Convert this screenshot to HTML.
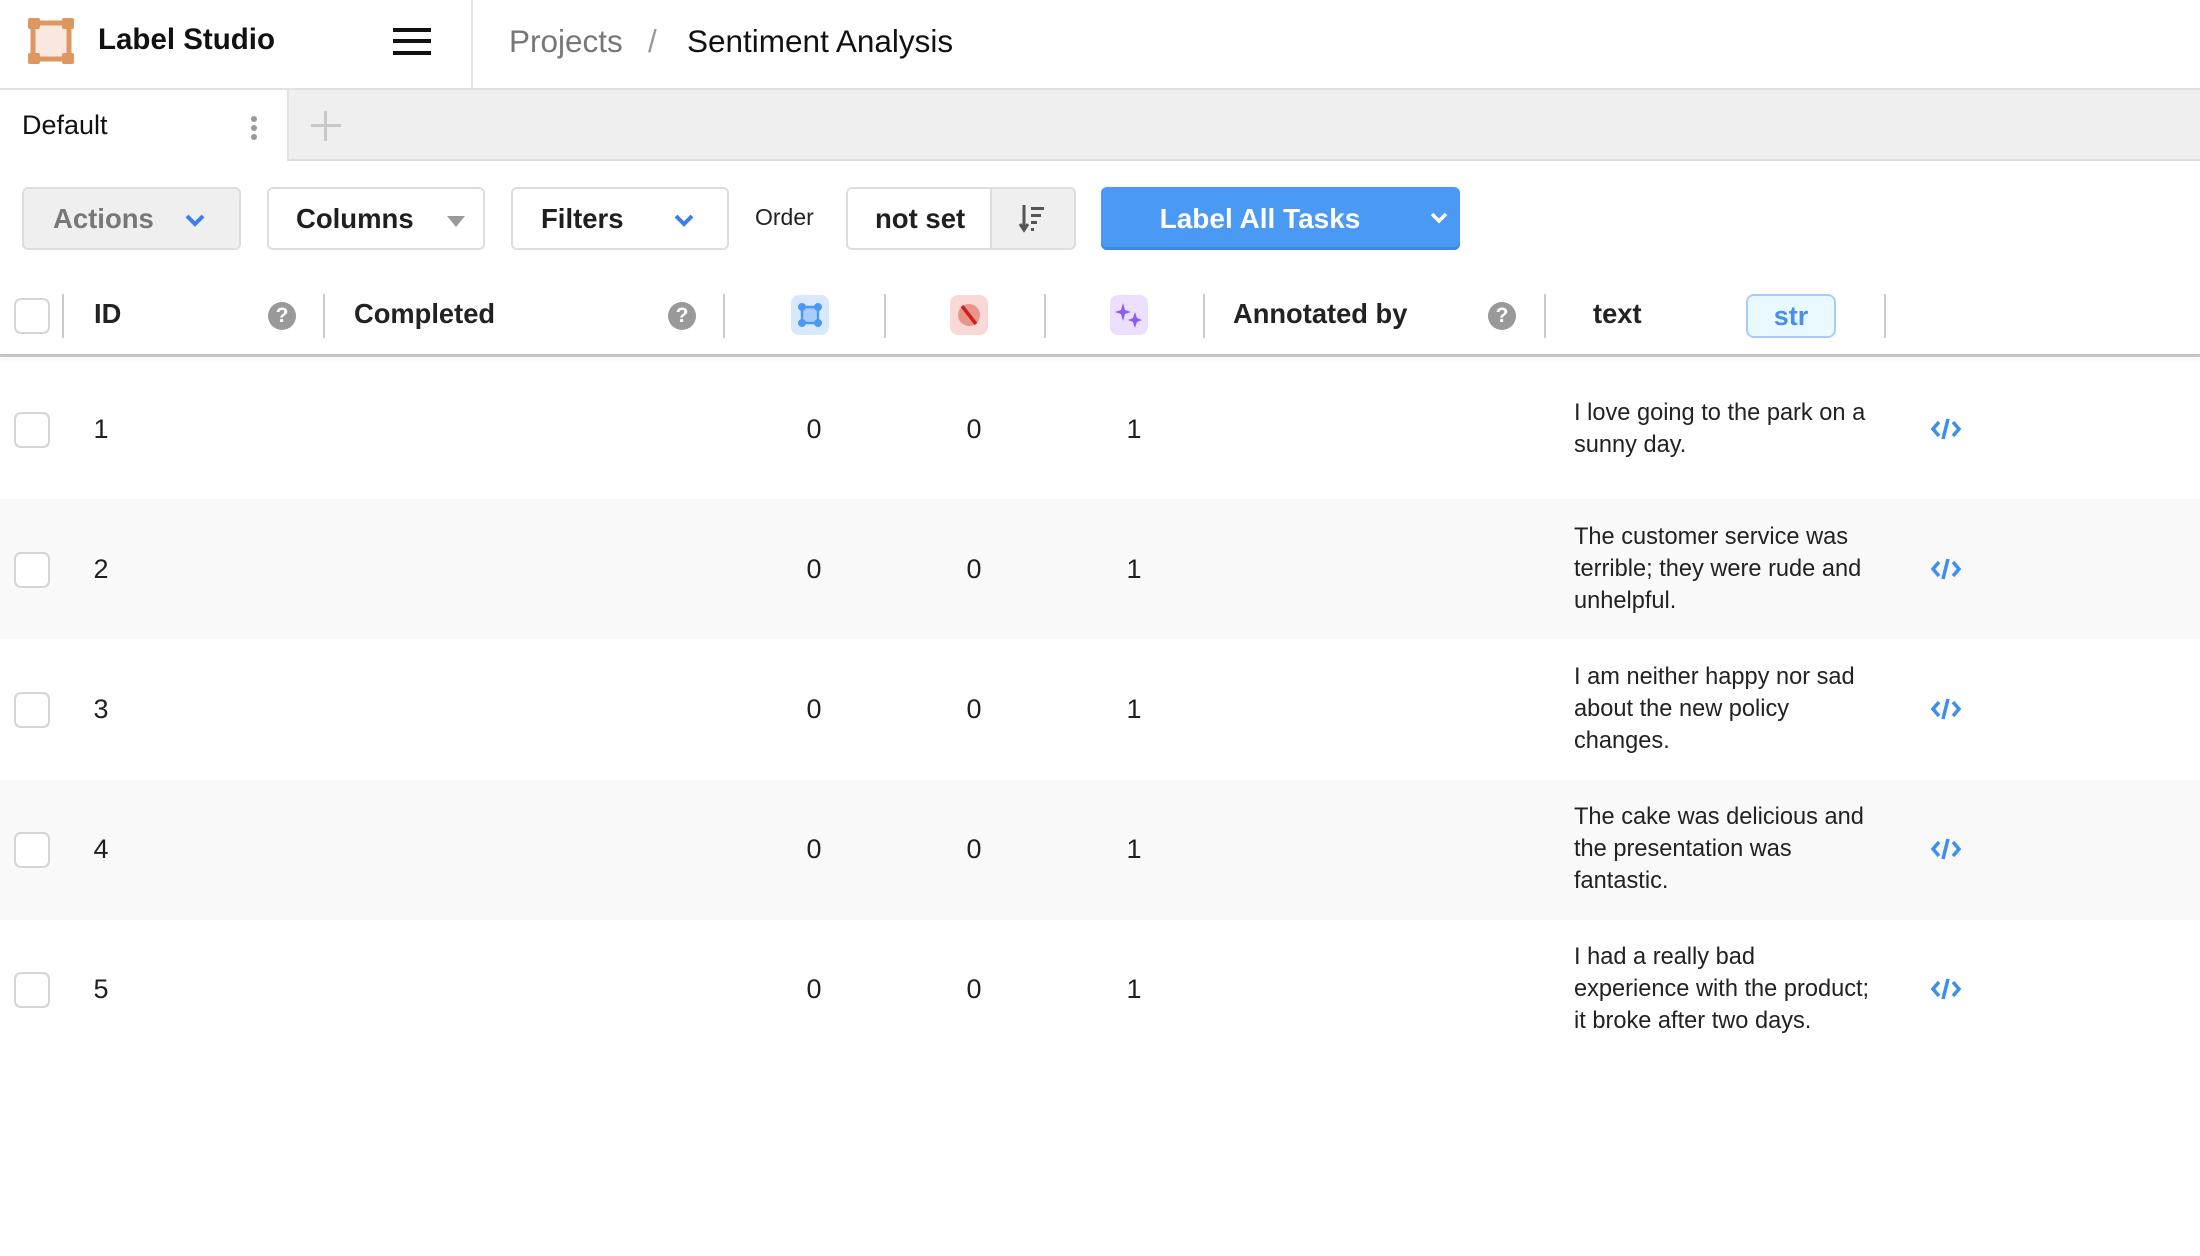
<!DOCTYPE html>
<html><head><meta charset="utf-8"><style>
*{box-sizing:border-box;margin:0;padding:0}
body{width:2200px;height:1256px;background:#fff;font-family:"Liberation Sans",sans-serif;color:#1f1f1f;position:relative;overflow:hidden}
.a{position:absolute}
.btn{position:absolute;top:187px;height:63px;border:2px solid #ddd;border-radius:6px;background:#fff;font-size:27.5px;font-weight:bold;display:flex;align-items:center}
.sep{position:absolute;top:294px;width:2px;height:44px;background:#ccc}
.cb{position:absolute;left:14px;width:36px;height:36px;border:2px solid #d5d5d5;border-radius:7px;background:#fff}
.row{position:absolute;left:0;width:2200px;height:140px}
.num{position:absolute;font-size:27px;transform:translateX(-50%)}
.txt{position:absolute;left:1574px;font-size:23.6px;line-height:32px;width:400px;white-space:nowrap;color:#222}
.help{position:absolute;top:302px;width:28px;height:28px;border-radius:50%;background:#999;color:#fff;font-size:21px;font-weight:bold;text-align:center;line-height:28px}
.hd{position:absolute;top:298px;font-size:27.3px;font-weight:bold;color:#222}
.ic{position:absolute;top:295px;width:38px;height:40px;border-radius:8px}
</style></head><body>
<svg class="a" style="left:28px;top:18px" width="48" height="46" viewBox="0 0 48 46"><rect x="5" y="5" width="36" height="36" fill="#f8e8df" stroke="#df9761" stroke-width="5"/><rect x="0" y="0" width="12" height="11" rx="2" fill="#df9761"/><rect x="34" y="0" width="12" height="11" rx="2" fill="#df9761"/><rect x="0" y="35" width="12" height="11" rx="2" fill="#df9761"/><rect x="34" y="35" width="12" height="11" rx="2" fill="#df9761"/></svg>
<div class="a" style="left:98px;top:23px;font-size:29.5px;font-weight:bold;color:#111">Label Studio</div>
<div class="a" style="left:393px;top:28px;width:38px;height:4px;background:#111"></div>
<div class="a" style="left:393px;top:39px;width:38px;height:4px;background:#111"></div>
<div class="a" style="left:393px;top:51px;width:38px;height:4px;background:#111"></div>
<div class="a" style="left:471px;top:0;width:2px;height:88px;background:#e6e6e6"></div>
<div class="a" style="left:509px;top:23px;font-size:31.5px;color:#777">Projects</div>
<div class="a" style="left:648px;top:23px;font-size:31.5px;color:#999">/</div>
<div class="a" style="left:687px;top:23px;font-size:31.5px;color:#111">Sentiment Analysis</div>
<div class="a" style="left:0;top:88px;width:2200px;height:73px;background:#efefef;border-top:2px solid #e2e2e2;border-bottom:2px solid #ddd"></div>
<div class="a" style="left:0;top:90px;width:289px;height:71px;background:#fff;border-right:2px solid #e2e2e2"></div>
<div class="a" style="left:22px;top:110px;font-size:27px;color:#111">Default</div>
<div class="a" style="left:251px;top:116px;width:6px;height:6px;border-radius:3px;background:#999;box-shadow:0 9px 0 #999,0 18px 0 #999"></div>
<div class="a" style="left:311px;top:124px;width:30px;height:3px;background:#c8c8c8"></div>
<div class="a" style="left:324px;top:111px;width:3px;height:30px;background:#c8c8c8"></div>
<div class="btn" style="left:22px;width:219px;background:#efefef;color:#777;padding-left:29px">Actions<svg class="a" style="left:160px;top:24px" width="22" height="14" viewBox="0 0 22 14"><path d="M3 3l8 8 8-8" stroke="#3c7df0" stroke-width="4" fill="none"/></svg></div>
<div class="btn" style="left:267px;width:218px;padding-left:27px">Columns<svg class="a" style="left:178px;top:27px" width="18" height="11"><path d="M0 0h18L9 11z" fill="#999"/></svg></div>
<div class="btn" style="left:511px;width:218px;padding-left:28px">Filters<svg class="a" style="left:160px;top:24px" width="22" height="14" viewBox="0 0 22 14"><path d="M3 3l8 8 8-8" stroke="#3c7df0" stroke-width="4" fill="none"/></svg></div>
<div class="a" style="left:755px;top:204px;font-size:23px;color:#222">Order</div>
<div class="btn" style="left:846px;width:230px;padding-left:27px;overflow:hidden">not set<div class="a" style="left:142px;top:0;width:86px;height:59px;background:#efefef;border-left:2px solid #ddd"></div><svg class="a" style="left:170px;top:14px" width="32" height="32" viewBox="0 0 32 32"><path d="M6 2v24M2 21l4 6 4-6" stroke="#555" stroke-width="3" fill="none"/><rect x="13" y="4" width="13" height="3" fill="#555"/><rect x="13" y="11" width="10" height="3" fill="#555"/><rect x="13" y="18" width="6" height="3" fill="#555"/><rect x="13" y="25" width="3" height="3" fill="#555"/></svg></div>
<div class="a" style="left:1101px;top:187px;width:359px;height:63px;border-radius:6px;background:#4a9af5;box-shadow:inset 0 -3px 0 #3d87dc"></div>
<div class="a" style="left:1101px;top:203px;width:318px;text-align:center;font-size:28px;font-weight:bold;color:#fff">Label All Tasks</div>
<svg class="a" style="left:1429px;top:211px" width="20" height="14" viewBox="0 0 20 14"><path d="M3 3l7 7 7-7" stroke="#fff" stroke-width="3.5" fill="none"/></svg>
<div class="cb" style="top:298px"></div>
<div class="sep" style="left:62px"></div><div class="sep" style="left:323px"></div><div class="sep" style="left:723px"></div><div class="sep" style="left:884px"></div><div class="sep" style="left:1044px"></div><div class="sep" style="left:1203px"></div><div class="sep" style="left:1544px"></div><div class="sep" style="left:1884px"></div>
<div class="hd" style="left:94px">ID</div><div class="help" style="left:268px">?</div>
<div class="hd" style="left:354px">Completed</div><div class="help" style="left:668px">?</div>
<div class="ic" style="left:791px;background:#d8e9fe"><svg width="38" height="40" viewBox="0 0 38 40"><rect x="11" y="12" width="16" height="16" fill="#a9ccfa" stroke="#4a9af5" stroke-width="2.5"/><circle cx="11" cy="12" r="4" fill="#4a9af5"/><circle cx="27" cy="12" r="4" fill="#4a9af5"/><circle cx="11" cy="28" r="4" fill="#4a9af5"/><circle cx="27" cy="28" r="4" fill="#4a9af5"/></svg></div>
<div class="ic" style="left:950px;background:#f8d9d5"><svg width="38" height="40" viewBox="0 0 38 40"><circle cx="19" cy="20" r="11" fill="#e9958c"/><path d="M12 11l14 18" stroke="#c9231c" stroke-width="3.5"/></svg></div>
<div class="ic" style="left:1110px;background:#ebdffd"><svg width="38" height="40" viewBox="0 0 38 40"><path d="M13 8l2 7 6 2-6 2-2 7-2-7-6-2 6-2z M25 17l2 6 5 2-5 2-2 6-2-6-5-2 5-2z" fill="#8b5cf0"/></svg></div>
<div class="hd" style="left:1233px">Annotated by</div><div class="help" style="left:1488px">?</div>
<div class="hd" style="left:1593px">text</div>
<div class="a" style="left:1746px;top:294px;width:90px;height:44px;border:2px solid #a9cdfb;border-radius:8px;background:#eaf9ff;color:#4a8ef0;font-size:27px;font-weight:bold;text-align:center;line-height:40px">str</div>
<div class="a" style="left:0;top:354px;width:2200px;height:3px;background:#c4c4c4;box-shadow:0 2px 6px rgba(0,0,0,0.08)"></div>
<div class="row" style="top:359px"></div>
<div class="row" style="top:499px;background:#f9f9f9"></div>
<div class="row" style="top:640px"></div>
<div class="row" style="top:780px;background:#f9f9f9"></div>
<div class="row" style="top:920px"></div>

<div class="cb" style="top:412px"></div><div class="num" style="left:101px;top:414px">1</div><div class="num" style="left:814px;top:414px">0</div><div class="num" style="left:974px;top:414px">0</div><div class="num" style="left:1134px;top:414px">1</div>
<div class="txt" style="top:397px">I love going to the park on a<br>sunny day.</div>

<div class="cb" style="top:552px"></div><div class="num" style="left:101px;top:554px">2</div><div class="num" style="left:814px;top:554px">0</div><div class="num" style="left:974px;top:554px">0</div><div class="num" style="left:1134px;top:554px">1</div>
<div class="txt" style="top:521px">The customer service was<br>terrible; they were rude and<br>unhelpful.</div>

<div class="cb" style="top:692px"></div><div class="num" style="left:101px;top:694px">3</div><div class="num" style="left:814px;top:694px">0</div><div class="num" style="left:974px;top:694px">0</div><div class="num" style="left:1134px;top:694px">1</div>
<div class="txt" style="top:661px">I am neither happy nor sad<br>about the new policy<br>changes.</div>

<div class="cb" style="top:832px"></div><div class="num" style="left:101px;top:834px">4</div><div class="num" style="left:814px;top:834px">0</div><div class="num" style="left:974px;top:834px">0</div><div class="num" style="left:1134px;top:834px">1</div>
<div class="txt" style="top:801px">The cake was delicious and<br>the presentation was<br>fantastic.</div>

<div class="cb" style="top:972px"></div><div class="num" style="left:101px;top:974px">5</div><div class="num" style="left:814px;top:974px">0</div><div class="num" style="left:974px;top:974px">0</div><div class="num" style="left:1134px;top:974px">1</div>
<div class="txt" style="top:941px">I had a really bad<br>experience with the product;<br>it broke after two days.</div>

<svg class="a" style="left:1931px;top:417px" width="30" height="24" viewBox="0 0 30 24"><path d="M8 5L2 12l6 7M22 5l6 7-6 7M17 2l-5 20" stroke="#3c8ef0" stroke-width="3.5" fill="none"/></svg>
<svg class="a" style="left:1931px;top:557px" width="30" height="24" viewBox="0 0 30 24"><path d="M8 5L2 12l6 7M22 5l6 7-6 7M17 2l-5 20" stroke="#3c8ef0" stroke-width="3.5" fill="none"/></svg>
<svg class="a" style="left:1931px;top:697px" width="30" height="24" viewBox="0 0 30 24"><path d="M8 5L2 12l6 7M22 5l6 7-6 7M17 2l-5 20" stroke="#3c8ef0" stroke-width="3.5" fill="none"/></svg>
<svg class="a" style="left:1931px;top:837px" width="30" height="24" viewBox="0 0 30 24"><path d="M8 5L2 12l6 7M22 5l6 7-6 7M17 2l-5 20" stroke="#3c8ef0" stroke-width="3.5" fill="none"/></svg>
<svg class="a" style="left:1931px;top:977px" width="30" height="24" viewBox="0 0 30 24"><path d="M8 5L2 12l6 7M22 5l6 7-6 7M17 2l-5 20" stroke="#3c8ef0" stroke-width="3.5" fill="none"/></svg>
</body></html>
